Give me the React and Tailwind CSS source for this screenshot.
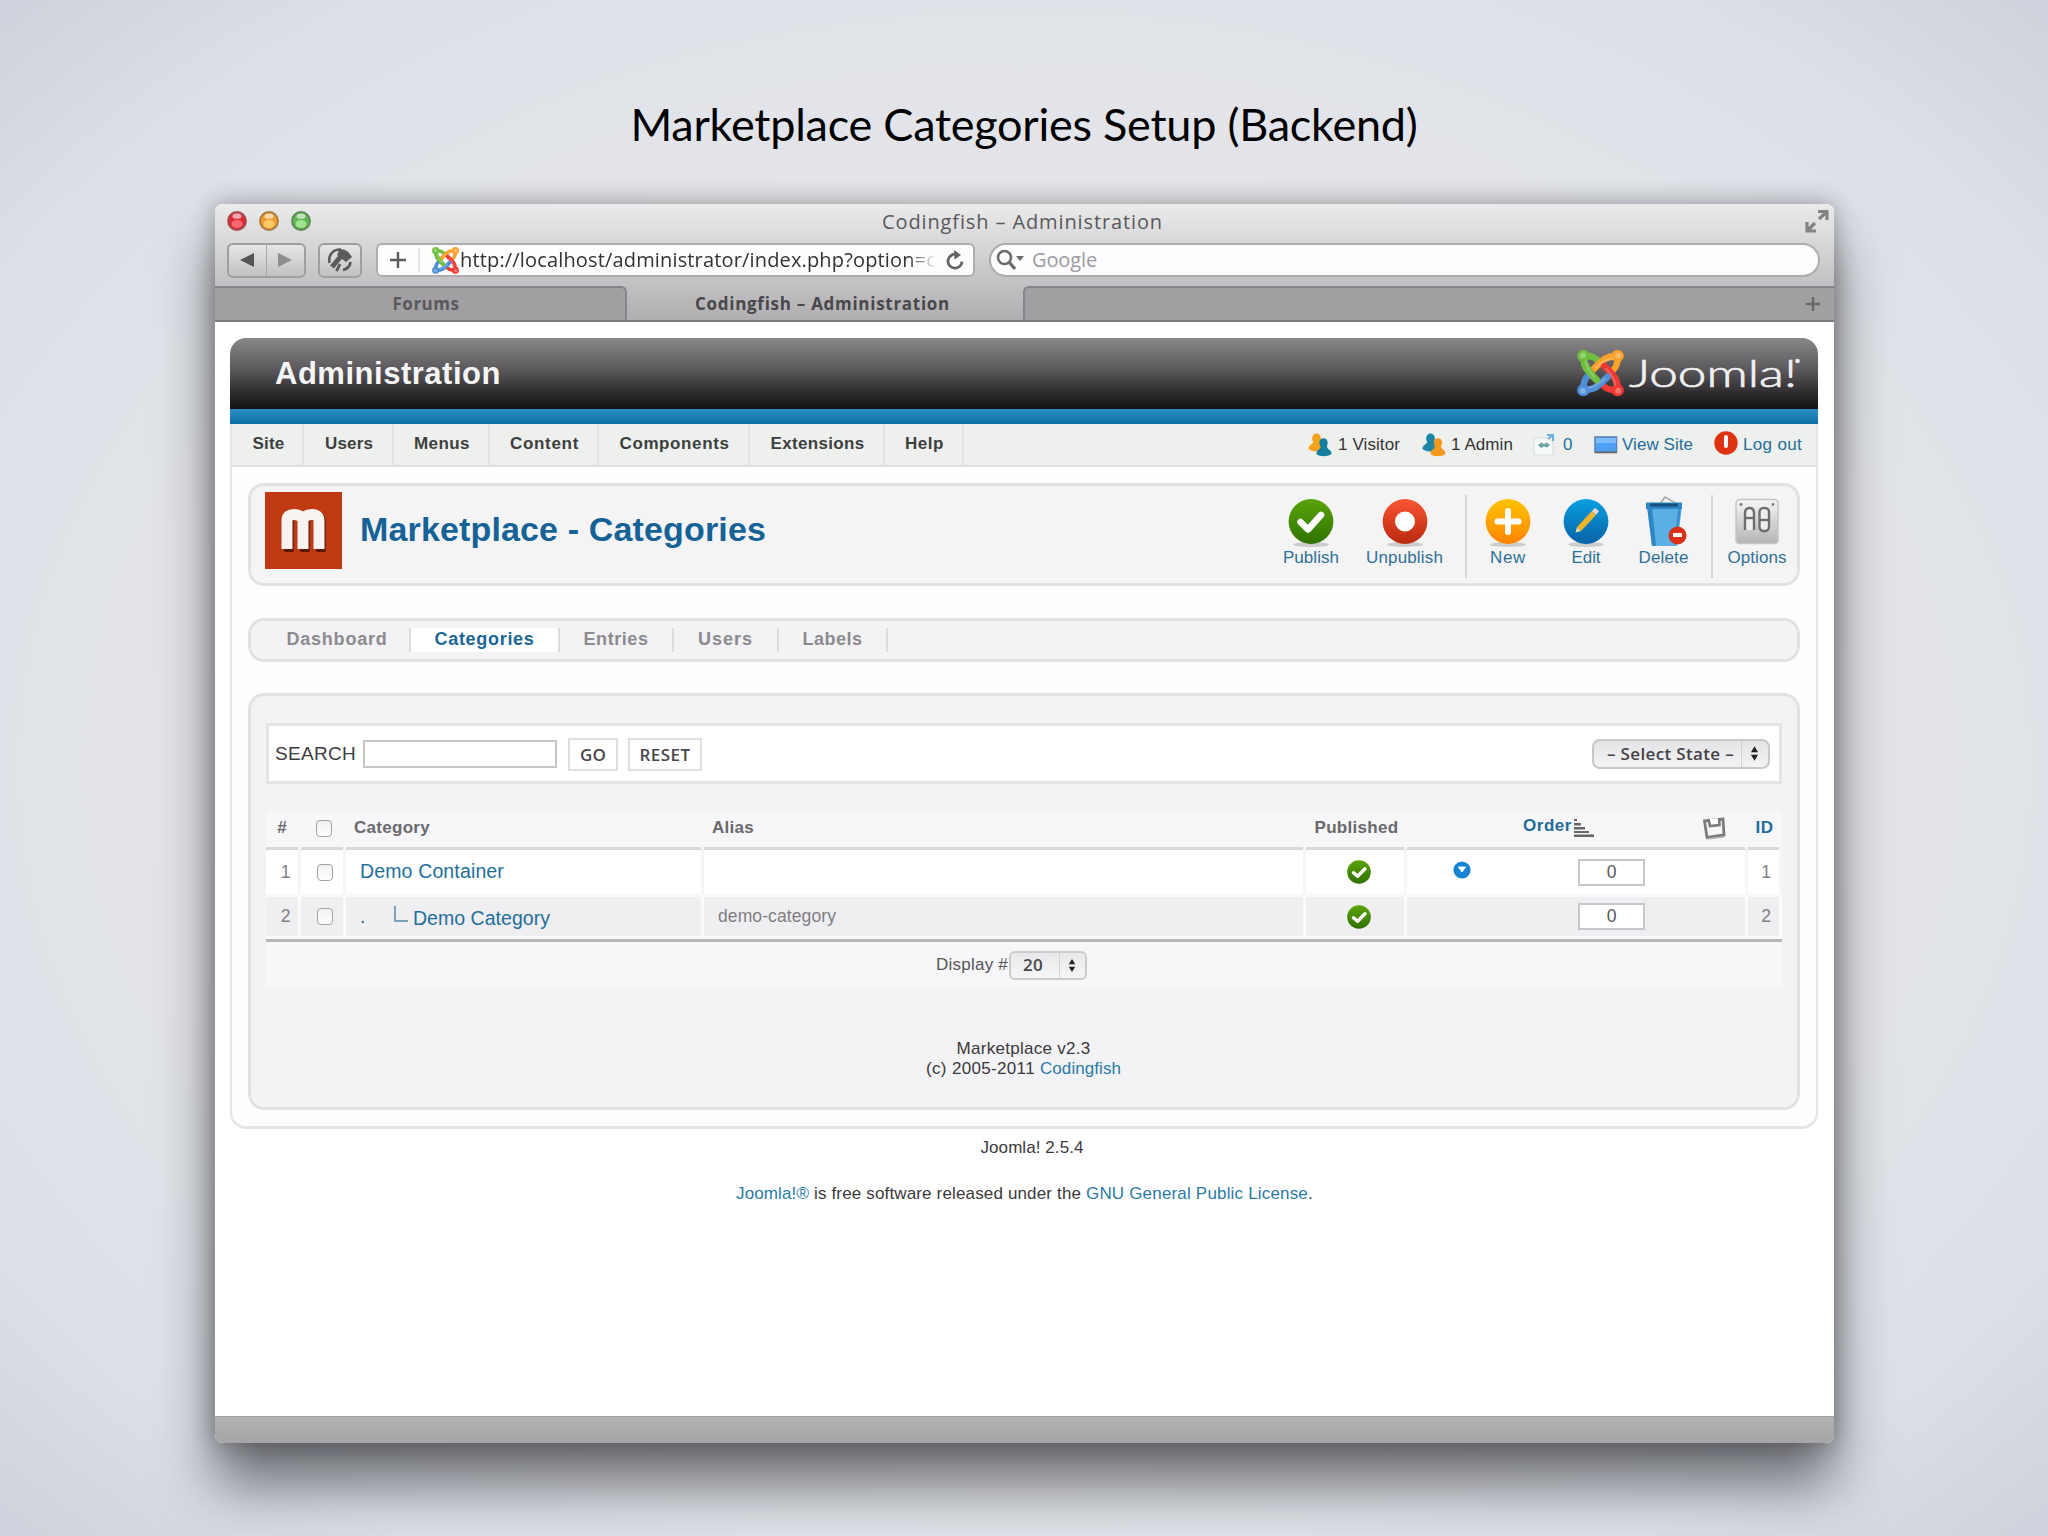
import { useLayoutEffect, useRef } from "react";

/* Single line of text whose tracking is adjusted so that it spans `w` pixels. */
function Fit({ w, className = "", children }) {
  const ref = useRef(null);
  useLayoutEffect(() => {
    const el = ref.current;
    el.style.letterSpacing = "0px";
    const natural = el.getBoundingClientRect().width;
    const count = el.textContent.length;
    el.style.letterSpacing = (w - natural) / count + "px";
  }, [w]);
  return (
    <span ref={ref} className={`inline-block whitespace-pre shrink-0 ${className}`}>
      {children}
    </span>
  );
}

const lucida = "font-['Open_Sans',sans-serif]";

function JoomlaMark({ className }) {
  const arms = [
    ["#6fbf3f", 0],
    ["#f9a12b", 90],
    ["#ee3a33", 180],
    ["#4f8fd6", 270],
  ];
  return (
    <svg viewBox="0 0 48 48" className={className} fill="none">
      {arms.map(([c, r]) => (
        <g key={c} transform={`rotate(${r} 24 24)`} stroke={c} strokeLinecap="round">
          <path d="M7 7 C13 6 17 7 21 11" strokeWidth="6.500" />
          <path d="M7 7 C6 17 10 21 20 31" strokeWidth="7" />
          <circle cx="6.5" cy="6.5" r="6.300" fill={c} stroke="none" />
        </g>
      ))}
      <path d="M9 16 C11 21 15 26 20 31" stroke="#6fbf3f" strokeWidth="7" strokeLinecap="round" />
      {arms.map(([c, r]) => (
        <g key={c} transform={`rotate(${r} 24 24)`}>
          <path d="M9 12 C10 19 13 23 18 28" stroke="#fff" strokeOpacity=".2" strokeWidth="2.200" strokeLinecap="round" />
          <circle cx="6" cy="6" r="3" fill="#fff" fillOpacity=".3" />
        </g>
      ))}
    </svg>
  );
}

function Light({ c, rim, hi }) {
  return (
    <svg viewBox="0 0 20 20" className="h-5 w-5">
      <circle cx="10" cy="10" r="9" fill={c} stroke={rim} strokeWidth="1.8" />
      <ellipse cx="10" cy="5.2" rx="4.5" ry="2.6" fill="#fff" fillOpacity=".6" />
      <ellipse cx="10" cy="13" rx="5.5" ry="4" fill={hi} fillOpacity=".75" />
    </svg>
  );
}

function People({ a, b, flip }) {
  return (
    <svg viewBox="0 0 24 24" className="h-6 w-6 shrink-0">
      <g fill={a}>
        <ellipse cx="8.5" cy="5.5" rx="4.4" ry="5" />
        <path d="M0.5 16 C0.5 11 5 12 5.500 8 L12 8 C12 13 15 12 15 17 C10 19 4 19 .5 16Z" />
      </g>
      <g fill={b}>
        <ellipse cx={flip ? 16 : 15.5} cy="10" rx="4.200" ry="4.8" />
        <path d="M8.5 21 C8.5 16 12.500 17 13 13 L19 13 C19 17 23.500 16 23.500 21 C19 24 12 24 8.5 21Z" />
      </g>
    </svg>
  );
}

function CheckDot({ className }) {
  return (
    <svg viewBox="0 0 24 24" className={className}>
      <defs>
        <linearGradient id="gd" x1="0" y1="0" x2="0" y2="1">
          <stop offset="0" stopColor="#5ba505" />
          <stop offset="1" stopColor="#2f6f00" />
        </linearGradient>
      </defs>
      <circle cx="12" cy="12" r="11.8" fill="url(#gd)" />
      <path d="M6.5 12.8 L10.5 16.3 L18 8.8" stroke="#fff" strokeWidth="3.4" fill="none" strokeLinecap="round" strokeLinejoin="round" />
    </svg>
  );
}

function Disc({ id, from, to, children }) {
  return (
    <svg viewBox="0 0 48 56" className="h-14 w-12">
      <defs>
        <linearGradient id={id} x1="0" y1="0" x2="0" y2="1">
          <stop offset="0" stopColor={from} />
          <stop offset="1" stopColor={to} />
        </linearGradient>
      </defs>
      <ellipse cx="24" cy="50.5" rx="18" ry="2.6" fill="#000" fillOpacity=".16" />
      <circle cx="24" cy="27.5" r="22.4" fill={`url(#${id})`} />
      {children}
    </svg>
  );
}

function Trash() {
  return (
    <svg viewBox="0 0 48 56" className="h-14 w-12">
      <path d="M20 10 L25 3 L34 8 L37 12" fill="#f4f4f4" stroke="#aaa" strokeWidth="1.6" />
      <path d="M7 12 L42 12 L37 52 L12 52Z" fill="#5ab0e5" />
      <path d="M7 12 L12 12 L16 52 L12 52Z" fill="#2f86c4" />
      <path d="M38 14 L41 14 L37 50 L34.500 50Z" fill="#3a92cd" />
      <path d="M6 8.5 H42 V15 H6Z" fill="#2b87c5" />
      <path d="M10 9.5 H38 V12.500 H10Z" fill="#17517c" />
      <circle cx="37.5" cy="41.5" r="9" fill="#dd2f17" />
      <path d="M33 41 H42" stroke="#fff" strokeWidth="4" />
    </svg>
  );
}

function OptionsIcon() {
  return (
    <svg viewBox="0 0 48 56" className="h-14 w-12">
      <defs>
        <linearGradient id="op" x1="0" y1="0" x2="0" y2="1">
          <stop offset="0" stopColor="#f6f6f6" />
          <stop offset="1" stopColor="#b4b4b4" />
        </linearGradient>
      </defs>
      <rect x="3" y="5.5" width="42" height="44" rx="3.5" fill="url(#op)" stroke="#c4c4c4" strokeWidth="1.5" />
      <g fill="#777">
        <circle cx="8" cy="10.5" r="1.4" />
        <circle cx="40" cy="10.5" r="1.4" />
      </g>
      <g fill="#efefef" stroke="#6e6e6e" strokeWidth="2.4">
        <path d="M12 36 V19 Q12 14 16.500 14 Q21 14 21 19 V36" />
        <path d="M12.500 24 H20.500" />
        <rect x="26.500" y="14" width="9.500" height="23" rx="4" />
        <path d="M26.500 26 H36" />
      </g>
    </svg>
  );
}

function ToolButton({ w, textW, label, children }) {
  return (
    <div className={`flex shrink-0 flex-col items-center ${w}`}>
      {children}
      <Fit w={textW} className="mt-[-2px] text-[17px] leading-5 text-[#2f7196]">{label}</Fit>
    </div>
  );
}

function Checkbox() {
  return <span className="h-[17px] w-4 rounded-[4px] border-[1.5px] border-[#a3a3a7] bg-linear-to-b from-[#f2f2f3] to-white" />;
}

function UpDown({ className }) {
  return (
    <svg viewBox="0 0 10 18" className={className} fill="#222">
      <path d="M5 1 L9 7.500 H1Z M5 17 L9 10.500 H1Z" />
    </svg>
  );
}

function MenuItem({ cell, w, children }) {
  return (
    <div className={`flex h-full items-center justify-center border-r-2 border-[#e0e3e0] pb-[2px] ${cell}`}>
      <Fit w={w} className="text-[17px] font-bold text-[#3c3f3d]">{children}</Fit>
    </div>
  );
}

function SubItem({ cell, w, active, children }) {
  return (
    <div className={`flex h-6 items-center justify-center border-r-2 border-[#dcdbde] pb-px ${cell} ${active ? "bg-white text-[#1b6797]" : "text-[#8c8b8e]"}`}>
      <Fit w={w} className="text-[18px] font-bold">{children}</Fit>
    </div>
  );
}

const columns = "grid grid-cols-[35px_45px_358px_602px_101px_341px_34px]";

function Head({ className = "", color = "text-[#6a696c]", children }) {
  return (
    <div className={`mr-[3px] flex items-center border-b-[3px] border-[#d9d8db] pb-[2px] text-[17px] font-bold ${color} ${className}`}>
      {children}
    </div>
  );
}

function Row({ n, alt, children, alias, down }) {
  const cell = `flex items-center border-r-[3px] ${alt ? "border-[#fbfafc] bg-[#efeef1]" : "border-[#f6f5f8] bg-white"}`;
  return (
    <div className={`${columns} ${alt ? "h-[45px] border-y-[3px] border-[#f9f8fa]" : "h-[44px]"} text-[17.500px] text-[#807f82]`}>
      <div className={`${cell} justify-center pl-[7px]`}>{n}</div>
      <div className={`${cell} justify-center pl-[6px]`}><Checkbox /></div>
      <div className={`${cell} pl-[14px] text-[19.500px] text-[#236f9b]`}>{children}</div>
      <div className={`${cell} pl-[14px]`}>{alias}</div>
      <div className={`${cell} justify-center pl-[7px]`}><CheckDot className="h-6 w-6" /></div>
      <div className={cell}>
        <div className="flex w-[171px] items-center pl-[46px]">
          {down && (
            <svg viewBox="0 0 18 18" className="mt-[-5px] h-[18px] w-[18px]">
              <circle cx="9" cy="9" r="8.600" fill="#1583d2" />
              <path d="M5.500 6 H12.500 L9 11Z" fill="#fff" stroke="#fff" strokeLinejoin="round" />
            </svg>
          )}
        </div>
        <div className="flex h-[27px] w-[67px] items-center justify-center border-2 border-[#c8c7cb] bg-white text-[#555]">0</div>
      </div>
      <div className={`${cell} justify-center pl-[5px]`}>{n}</div>
    </div>
  );
}

function Browser() {
  return (
    <div className="shrink-0 bg-linear-to-b from-[#ebebec] via-[#d0cfd1] via-45% to-[#aeacaf]">
      <div className="flex h-[34px] items-center pl-3">
        <div className="flex w-[655px] gap-3">
          <Light c="#df2a36" rim="#a34a4e" hi="#ff7f86" />
          <Light c="#ee9c2e" rim="#a8783c" hi="#ffdb7c" />
          <Light c="#62b552" rim="#5b8a52" hi="#b6f3a0" />
        </div>
        <Fit w={281} className={`${lucida} mt-px text-[20px] leading-7 text-[#59595b]`}>Codingfish – Administration</Fit>
        <svg viewBox="0 0 24 24" className="mr-[5px] ml-auto h-6 w-6" fill="none" stroke="#838386" strokeWidth="3.200">
          <path d="M13 2.500 H22 V11 M21 3.500 L14 10" />
          <path d="M11 22 H2 V13 M3 21 L10 14" />
        </svg>
      </div>
      <div className="flex h-12 items-center pb-1 pl-3">
        <div className="flex h-[35px] w-[79px] items-center rounded-md border-2 border-[#9f9ea1] bg-linear-to-b from-[#e6e6e7] to-[#c2c1c4]">
          <div className="flex h-full w-1/2 items-center justify-center border-r border-[#a8a7aa]">
            <svg viewBox="0 0 14 14" className="h-[14px] w-[14px]" fill="#555"><path d="M14 0V14L0 7Z" /></svg>
          </div>
          <div className="flex w-1/2 items-center justify-center">
            <svg viewBox="0 0 14 14" className="h-[14px] w-[14px]" fill="#8e8d90"><path d="M0 0V14L14 7Z" /></svg>
          </div>
        </div>
        <div className="ml-3 flex h-[35px] w-[44px] items-center justify-center rounded-md border-2 border-[#9f9ea1] bg-linear-to-b from-[#e6e6e7] to-[#c2c1c4]">
          <svg viewBox="0 0 26 26" className="h-[26px] w-[26px]" fill="none" stroke="#5b5a5d">
            <path d="M2.500 16 C1 8 6 2 14 2.500" strokeWidth="2.600" />
            <path d="M9.500 24 L13 17 M16 23 C20 22 23 19 23.500 15" strokeWidth="2.800" />
            <path d="M5 20 L15 8" strokeWidth="5" />
            <path d="M12 3 Q19 0 25 10 L19 15 L10 8Z" fill="#5b5a5d" stroke="none" />
          </svg>
        </div>
        <div className="ml-[14px] flex h-[34px] w-[599px] items-center rounded-md border-2 border-[#adacaf] bg-[#fdfcfe]">
          <svg viewBox="0 0 16 16" className="ml-3 h-4 w-4" stroke="#5c5b5e" strokeWidth="2.400"><path d="M8 0V16M0 8H16" /></svg>
          <span className="ml-[12px] h-6 w-[2px] bg-[#e4e3e6]" />
          <JoomlaMark className="ml-3 h-[27px] w-[27px]" />
          <Fit w={476} className={`${lucida} ml-px text-[20px] text-[#333] [mask-image:linear-gradient(to_right,#000_94%,transparent)]`}>
            http://localhost/administrator/index.php?option=c
          </Fit>
          <svg viewBox="0 0 20 20" className="ml-auto mr-2 h-5 w-5" fill="none" stroke="#646366" strokeWidth="2.800">
            <path d="M17 11.500 A7 7 0 1 1 12 4.500" />
            <path d="M9 0 L16 5 L9.500 9.500Z" fill="#646366" stroke="none" />
          </svg>
        </div>
        <div className="ml-[14px] flex h-[34px] w-[831px] items-center rounded-full border-2 border-[#adacaf] bg-[#fdfcfe]">
          <svg viewBox="0 0 30 22" className="ml-[5px] h-[22px] w-[30px]" fill="none" stroke="#6b6a6d" strokeWidth="2.600">
            <circle cx="8.500" cy="8.500" r="6.500" />
            <path d="M13 13 L19 20" strokeWidth="3.200" />
            <path d="M20 7 H28 L24 12Z" fill="#6b6a6d" stroke="none" />
          </svg>
          <Fit w={65} className={`${lucida} ml-[6px] text-[20px] text-[#9b9a9d]`}>Google</Fit>
        </div>
      </div>
      <div className={`${lucida} flex h-9 border-b-2 border-[#7e7c80] text-[17px] font-bold text-[#59585b]`}>
        <div className="flex w-[412px] items-center justify-center rounded-tr-md border-t-2 border-r-2 border-[#868488] bg-[#a19fa2]">
          <Fit w={67} className="mr-[-12px]">Forums</Fit>
        </div>
        <div className="flex w-[396px] items-center justify-center pt-px text-[#48474a]">
          <Fit w={255} className="ml-[-5px]">Codingfish – Administration</Fit>
        </div>
        <div className="flex flex-1 items-center justify-end rounded-tl-md border-t-2 border-l-2 border-[#868488] bg-[#a19fa2] pr-[14px]">
          <svg viewBox="0 0 14 14" className="h-[14px] w-[14px]" stroke="#6a696c" strokeWidth="2.600"><path d="M7 0V14M0 7H14" /></svg>
        </div>
      </div>
    </div>
  );
}

function AdminHeader() {
  return (
    <div className="shrink-0">
      <div className="flex h-[71px] items-center rounded-t-2xl bg-linear-to-b from-[#89878a] via-[#5a585b] via-45% to-[#131113] pl-[45px]">
        <Fit w={226} className="mt-[2px] text-[31px] font-bold text-[#f6f5f7]">Administration</Fit>
        <JoomlaMark className="mt-[-2px] ml-auto h-[48px] w-[47px]" />
        <svg viewBox="0 0 176 48" className="mr-[18px] h-12 w-[176px]" fill="#efeef0">
          <text x="5" y="36.500" fontFamily="Lato" fontWeight="300" fontSize="37" textLength="168" lengthAdjust="spacingAndGlyphs" stroke="#efeef0" strokeWidth=".7">Joomla!</text>
          <circle cx="173.500" cy="11" r="2.300" />
        </svg>
      </div>
      <div className="h-[15px] bg-linear-to-b from-[#2a92c5] to-[#0f6fa5]" />
    </div>
  );
}

function MenuBar() {
  return (
    <div className="flex h-[43px] shrink-0 items-center border-b-2 border-[#dedddf] bg-[#eef0ee] text-[17px]">
      <MenuItem cell="w-[72px] pl-[3px]" w={32}>Site</MenuItem>
      <MenuItem cell="w-[90px] pl-[2px]" w={48}>Users</MenuItem>
      <MenuItem cell="w-[96px] pl-[2px]" w={56}>Menus</MenuItem>
      <MenuItem cell="w-[109px] pl-[2px]" w={69}>Content</MenuItem>
      <MenuItem cell="w-[151px] pl-[2px]" w={110}>Components</MenuItem>
      <MenuItem cell="w-[135px] pl-[2px]" w={94}>Extensions</MenuItem>
      <MenuItem cell="w-[79px] pl-[2px]" w={39}>Help</MenuItem>
      <div className="ml-auto mr-[14px] flex items-center text-[#333]">
        <People a="#f5a21d" b="#147f9f" />
        <Fit w={62} className="ml-[6px]">1 Visitor</Fit>
        <span className="w-[22px]" />
        <People a="#1d86a6" b="#f5991d" flip />
        <Fit w={62} className="ml-[5px]">1 Admin</Fit>
        <svg viewBox="0 0 24 24" className="ml-[19px] h-6 w-6">
          <path d="M2 5 H15 L21 9 V22 H2Z" fill="#f8f9f9" stroke="#d9dcde" />
          <path d="M15 2 H21 V8 M21 2 L16 6" stroke="#6aaede" strokeWidth="2" fill="none" />
          <path d="M6 12 L9 9.500 L12 11 L15 9.500 L18 12 L15 14.500 L12 13.500 L9 15Z" fill="#6fa5a6" />
        </svg>
        <Fit w={11} className="ml-[7px] text-[#246f99]">0</Fit>
        <svg viewBox="0 0 24 18" className="ml-[20px] h-[18px] w-6">
          <rect x="1" y="1" width="21.500" height="15" fill="#4ea0f5" stroke="#5b86b5" strokeWidth="1.600" />
          <path d="M2 2 H22 V7 H2Z" fill="#7cbcff" />
          <path d="M1 16.500 H23" stroke="#666" strokeWidth="1.600" />
        </svg>
        <Fit w={71} className="ml-[4px] text-[#246f99]">View Site</Fit>
        <svg viewBox="0 0 24 24" className="ml-[21px] mt-[-3px] h-6 w-6">
          <circle cx="12" cy="12" r="11.700" fill="#dd3311" />
          <path d="M12 6 V15" stroke="#fff" strokeWidth="4" strokeLinecap="round" />
        </svg>
        <Fit w={59} className="ml-[5px] text-[#246f99]">Log out</Fit>
      </div>
    </div>
  );
}

function ToolBox() {
  return (
    <div className="mx-4 mt-4 flex h-[103px] shrink-0 rounded-2xl border-[3px] border-[#e2e1e4] bg-[#f4f4f5] pl-[14px]">
      <svg viewBox="0 0 77 77" className="mt-[6px] h-[77px] w-[77px]">
        <rect width="77" height="77" fill="#bf3a13" />
        <g fill="none" strokeWidth="9.500">
          <path d="M24 60 V28 Q24 23 30 23 Q38 23 40 28 Q43 23 49 23 Q56 23 56 30 V60 M40 60 V28" stroke="#5c1a06" />
          <path d="M22 57 V28 Q22 22.500 29 22.500 Q35 22.500 38 27 Q41 22.500 47 22.500 Q54 22.500 54 29 V57 M38 57 V26" stroke="#f7f3f1" strokeWidth="11" />
        </g>
      </svg>
      <Fit w={406} className="ml-[18px] mt-[20px] text-[34px] leading-[46px] font-bold text-[#156296]">Marketplace - Categories</Fit>
      <div className="mr-[-4px] mt-[8px] ml-auto flex">
        <ToolButton w="w-[90px]" textW={56} label="Publish">
          <Disc id="pub" from="#5aa30b" to="#2f7300">
            <path d="M13.500 28 L21 35.500 L34 21" stroke="#fff" strokeWidth="6.500" fill="none" strokeLinecap="round" strokeLinejoin="round" />
          </Disc>
        </ToolButton>
        <ToolButton w="w-[97px]" textW={77} label="Unpublish">
          <Disc id="unp" from="#fb5533" to="#b92a0f"><circle cx="24" cy="27.500" r="10" fill="#fff" /></Disc>
        </ToolButton>
        <span className="ml-[12px] mt-px h-[83px] w-[2px] bg-[#d6d5d8]" />
        <ToolButton w="w-[82px]" textW={36} label="New">
          <Disc id="new" from="#ffc400" to="#ff8400"><path d="M24 17V38M13.500 27.500H34.500" stroke="#fff" strokeWidth="6" strokeLinecap="round" /></Disc>
        </ToolButton>
        <ToolButton w="w-[74px]" textW={29} label="Edit">
          <Disc id="edt" from="#0a9fe0" to="#0662a6">
            <path d="M17 35 L32 19" stroke="#f0b429" strokeWidth="5.500" />
            <path d="M32 19 L35 15.500" stroke="#e8d3cf" strokeWidth="5.500" />
            <path d="M13.500 38.500 L15 33 L19 37Z" fill="#f0d9a0" />
          </Disc>
        </ToolButton>
        <ToolButton w="w-[81px]" textW={50} label="Delete"><Trash /></ToolButton>
        <span className="ml-[7px] mt-px h-[83px] w-[2px] bg-[#d6d5d8]" />
        <ToolButton w="w-[88px]" textW={59} label="Options"><OptionsIcon /></ToolButton>
      </div>
    </div>
  );
}

function MainBox() {
  return (
    <div className="mx-4 mt-[31px] h-[417px] shrink-0 rounded-2xl border-[3px] border-[#e2e1e4] bg-[#f3f2f5] px-[15px] pt-[27px]">
      <div className="flex h-[61px] items-center border-[3px] border-[#e4e3e6] bg-white pl-[6px]">
        <Fit w={81} className="mt-[2px] text-[19px] text-[#3d3d3f]">SEARCH</Fit>
        <div className="ml-[7px] h-7 w-[194px] border-2 border-[#c6c5c9] bg-white" />
        <div className={`${lucida} ml-[11px] mt-[2px] flex h-[33px] w-[50px] items-center justify-center border-2 border-[#e0dfe3] bg-white text-[17px] font-semibold text-[#48474a]`}>
          <Fit w={26}>GO</Fit>
        </div>
        <div className={`${lucida} ml-[10px] mt-[2px] flex h-[33px] w-[74px] items-center justify-center border-2 border-[#e0dfe3] bg-white text-[17px] font-semibold text-[#48474a]`}>
          <Fit w={51}>RESET</Fit>
        </div>
        <div className={`${lucida} ml-auto mr-[9px] flex h-[30px] w-[178px] items-center rounded-lg border-2 border-[#c8c7ca] bg-linear-to-b from-[#e4e3e6] to-[#f4f4f5] pl-[13px] text-[17px] font-semibold text-[#444346]`}>
          <Fit w={127}>– Select State –</Fit>
          <span className="ml-[7px] h-full w-px bg-[#d0cfd2]" />
          <UpDown className="ml-2 h-[17px] w-[9px]" />
        </div>
      </div>
      <div className={`${columns} mt-[27px] h-[39px] bg-[#f7f6f9]`}>
        <Head className="justify-center">#</Head>
        <Head className="justify-center pl-1"><Checkbox /></Head>
        <Head className="pl-2"><Fit w={76}>Category</Fit></Head>
        <Head className="pl-2"><Fit w={42}>Alias</Fit></Head>
        <Head className="justify-center pl-[3px]"><Fit w={84}>Published</Fit></Head>
        <Head>
          <Fit w={49} className="ml-[116px] mt-[-5px] text-[#1f6c9a]">Order</Fit>
          <svg viewBox="0 0 20 18" className="ml-[2px] h-[18px] w-5" fill="#666">
            <path d="M0 0H3V2H0ZM0 4H7V6.500H0ZM0 8H11V10.500H0ZM0 12H15V14H0ZM0 15.500H20V18H0Z" />
          </svg>
          <svg viewBox="0 0 24 24" className="ml-auto mr-[19px] h-6 w-6" fill="none" stroke="#7b7a7d">
            <path d="M2.500 5 L21 3 L22 19 L5 21.500Z" fill="#f6f6f6" strokeWidth="2.800" />
            <path d="M6.500 3 L8 10 L17.500 9 L17 2" fill="#fff" strokeWidth="2.600" />
            <path d="M5 23 L22 21" stroke="#bbb" strokeWidth="1.500" />
          </svg>
        </Head>
        <Head color="text-[#1f6c9a]" className="justify-center pl-[2px]"><Fit w={18}>ID</Fit></Head>
      </div>
      <Row n="1" down><Fit w={144}>Demo Container</Fit></Row>
      <Row n="2" alt alias={<Fit w={118}>demo-category</Fit>}>
        <span className="w-[34px]">.</span>
        <svg viewBox="0 0 14 16" className="mb-[6px] h-4 w-[14px]" fill="none" stroke="#7aa3b8" strokeWidth="2"><path d="M1 0V15H14" /></svg>
        <Fit w={137} className="ml-[5px] mt-1">Demo Category</Fit>
      </Row>
      <div className="flex h-[49px] items-center border-t-[3px] border-[#b7b6b9] bg-[#f7f6f9] pl-[670px] text-[17px] text-[#555457]">
        <Fit w={72}>Display #</Fit>
        <div className={`${lucida} ml-px flex h-[29px] w-[78px] items-center rounded-md border-2 border-[#cccbce] bg-linear-to-b from-[#e9e8eb] to-[#f5f5f6] pl-3 font-semibold text-[#48474a]`}>
          <Fit w={20}>20</Fit>
          <span className="ml-[16px] h-full w-px bg-[#d4d3d6]" />
          <UpDown className="ml-2 h-[15px] w-2" />
        </div>
      </div>
      <div className="mt-[51px] flex flex-col items-center pr-px text-[17px] leading-[19.500px] text-[#3a393c]">
        <Fit w={134}>Marketplace v2.3</Fit>
        <div className="flex">
          <Fit w={114}>(c) 2005-2011 </Fit>
          <Fit w={81} className="text-[#2a7ba6]">Codingfish</Fit>
        </div>
      </div>
    </div>
  );
}

export default function App() {
  return (
    <div className="flex h-[1536px] w-[2048px] flex-col overflow-hidden bg-[radial-gradient(ellipse_75%_75%_at_50%_50%,#e9eaee_0%,#e2e4e9_60%,#dce0e7_78%,#c8cdd8_100%)] font-['Liberation_Sans',sans-serif]">
      <h1 className="flex h-[204px] shrink-0 justify-center pt-[94px] font-['Lato',sans-serif] text-[45px] leading-[60px] text-black">
        <Fit w={787}>Marketplace Categories Setup (Backend)</Fit>
      </h1>
      <div className="ml-[215px] flex h-[1239px] w-[1619px] shrink-0 flex-col overflow-hidden rounded-lg bg-white shadow-[0_42px_56px_rgba(20,20,25,0.56),0_0_24px_rgba(0,0,0,0.32)]">
        <Browser />
        <div className="flex flex-1 flex-col pt-4 pr-4 pl-[15px]">
          <div className="flex h-[791px] shrink-0 flex-col">
            <AdminHeader />
            <div className="flex flex-1 flex-col rounded-b-2xl border-x-2 border-b-[3px] border-[#e5e4e7] bg-[#fefefe]">
              <MenuBar />
              <ToolBox />
              <div className="mx-4 mt-8 flex h-[44px] shrink-0 items-center rounded-2xl border-[3px] border-[#e2e1e4] bg-[#f3f2f5] pl-[16px]">
                <SubItem cell="w-[144px] pr-[2px]" w={101}>Dashboard</SubItem>
                <SubItem cell="w-[149px]" w={100} active>Categories</SubItem>
                <SubItem cell="w-[114px]" w={65}>Entries</SubItem>
                <SubItem cell="w-[105px]" w={55}>Users</SubItem>
                <SubItem cell="w-[109px]" w={60}>Labels</SubItem>
              </div>
              <MainBox />
            </div>
          </div>
          <div className="flex flex-col items-center pt-[9px] text-[17px] leading-[20px] text-[#3a393c]">
            <Fit w={103} className="ml-[16px]">Joomla! 2.5.4</Fit>
            <div className="mt-[26px] flex">
              <Fit w={78} className="text-[#2a7ba6]">Joomla!® </Fit>
              <Fit w={272}>is free software released under the </Fit>
              <Fit w={222} className="text-[#2a7ba6]">GNU General Public License</Fit>
              <Fit w={4}>.</Fit>
            </div>
          </div>
        </div>
        <div className="h-[27px] shrink-0 border-t border-[#9f9ea1] bg-linear-to-b from-[#b2b1b4] to-[#a5a4a7]" />
      </div>
    </div>
  );
}
